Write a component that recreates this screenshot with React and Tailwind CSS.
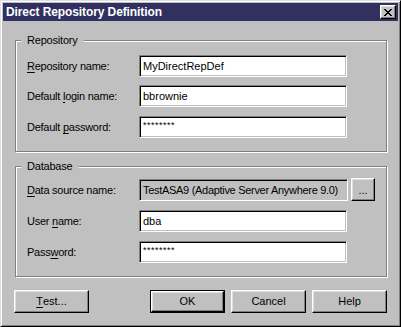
import React from "react";

const raised =
  "border border-t-white border-l-white border-r-black border-b-black shadow-[inset_-1px_-1px_0_#808080,inset_1px_1px_0_#dfdfdf]";
const sunken =
  "border border-t-[#808080] border-l-[#808080] border-r-white border-b-white shadow-[inset_1px_1px_0_#000,inset_-1px_-1px_0_#c0c0c0]";

function Field({ value, password, disabled, w = "w-[208px]" }) {
  return (
    <div
      className={`${sunken} ${w} h-[22px] ${disabled ? "bg-[#c0c0c0]" : "bg-white"} pl-[3px] flex ${password ? "items-start" : "items-center"} overflow-hidden whitespace-nowrap`}
    >
      {password ? (
        <span className="text-[9px] leading-[9px] pt-[4px] tracking-[0.5px] text-black">********</span>
      ) : (
        <span className={`text-[11px] leading-[18px] text-black ${disabled ? "tracking-[-0.3px]" : ""}`}>{value}</span>
      )}
    </div>
  );
}

function Label({ children }) {
  return <div className="w-[112px] text-[11px] tracking-[-0.25px] text-black leading-[14px]">{children}</div>;
}

function Row({ label, children, className = "" }) {
  return (
    <div className={`flex items-center ${className}`}>
      <Label>{label}</Label>
      {children}
    </div>
  );
}

function Group({ title, h, className = "", children }) {
  return (
    <div
      className={`relative w-[372px] ${h} border border-[#808080] shadow-[inset_1px_1px_0_#fff,1px_1px_0_#fff] ${className}`}
    >
      <span className="absolute -top-[7px] left-[5px] px-[6px] bg-[#c0c0c0] text-[11px] leading-[12px] tracking-[-0.2px] text-black">
        {title}
      </span>
      {children}
    </div>
  );
}

function Button({ children, def, className = "" }) {
  if (def) {
    return (
      <div className={`w-[75px] h-[23px] border border-black ${className}`}>
        <div className={`${raised} w-full h-full flex items-center justify-center text-[11px] text-black`}>
          {children}
        </div>
      </div>
    );
  }
  return (
    <div className={`${raised} w-[75px] h-[23px] flex items-center justify-center text-[11px] text-black ${className}`}>
      {children}
    </div>
  );
}

const U = ({ children }) => <span className="underline underline-offset-[2px] decoration-1">{children}</span>;

export default function App() {
  return (
    <div
      className="w-[401px] h-[327px] bg-[#c0c0c0] border border-t-[#dfdfdf] border-l-[#dfdfdf] border-r-black border-b-black shadow-[inset_1px_1px_0_#fff,inset_-1px_-1px_0_#808080] p-[2px] overflow-hidden"
      style={{ fontFamily: "'Liberation Sans', Arial, sans-serif" }}
    >
      <div className="h-[18px] bg-[#313060] flex items-center justify-between pl-[3px] pr-[2px]">
        <span className="text-white font-bold text-[12px] leading-none tracking-[-0.1px]">
          Direct Repository Definition
        </span>
        <div className={`${raised} w-[16px] h-[14px] bg-[#c0c0c0] flex items-center justify-center`}>
          <svg width="8" height="7" viewBox="0 0 8 7" shapeRendering="crispEdges">
            <path d="M0 0h2v1h-2zM6 0h2v1h-2zM1 1h2v1h-2zM5 1h2v1h-2zM2 2h4v1h-4zM3 3h2v1h-2zM2 4h4v1h-4zM1 5h2v1h-2zM5 5h2v1h-2zM0 6h2v1h-2zM6 6h2v1h-2z" fill="#000" />
          </svg>
        </div>
      </div>

      <div className="pl-[12px] pt-[19px]">
        <Group title="Repository" h="h-[112px]" className="pl-[11px] pt-[14px]">
          <Row label={<><U>R</U>epository name:</>}>
            <Field value="MyDirectRepDef" />
          </Row>
          <Row label={<>Default <U>l</U>ogin name:</>} className="mt-[8px]">
            <Field value="bbrownie" />
          </Row>
          <Row label={<>Default <U>p</U>assword:</>} className="mt-[9px]">
            <Field password />
          </Row>
        </Group>

        <Group title="Database" h="h-[111px]" className="mt-[14px] pl-[11px] pt-[11px]">
          <Row label={<><U>D</U>ata source name:</>}>
            <Field value="TestASA9 (Adaptive Server Anywhere 9.0)" disabled w="w-[209px]" />
            <div className={`${raised} ml-[3px] w-[24px] h-[23px] flex items-end justify-center pb-[4px] text-[11px] leading-none text-black`}>
              ...
            </div>
          </Row>
          <Row label={<>User <U>n</U>ame:</>} className="mt-[9px]">
            <Field value="dba" />
          </Row>
          <Row label={<>Pass<U>w</U>ord:</>} className="mt-[9px]">
            <Field password />
          </Row>
        </Group>

        <div className="flex -ml-px mt-[13px]">
          <Button><><U>T</U>est...</></Button>
          <Button def className="ml-[61px]">OK</Button>
          <Button className="ml-[6px]">Cancel</Button>
          <Button className="ml-[6px]">Help</Button>
        </div>
      </div>
    </div>
  );
}
